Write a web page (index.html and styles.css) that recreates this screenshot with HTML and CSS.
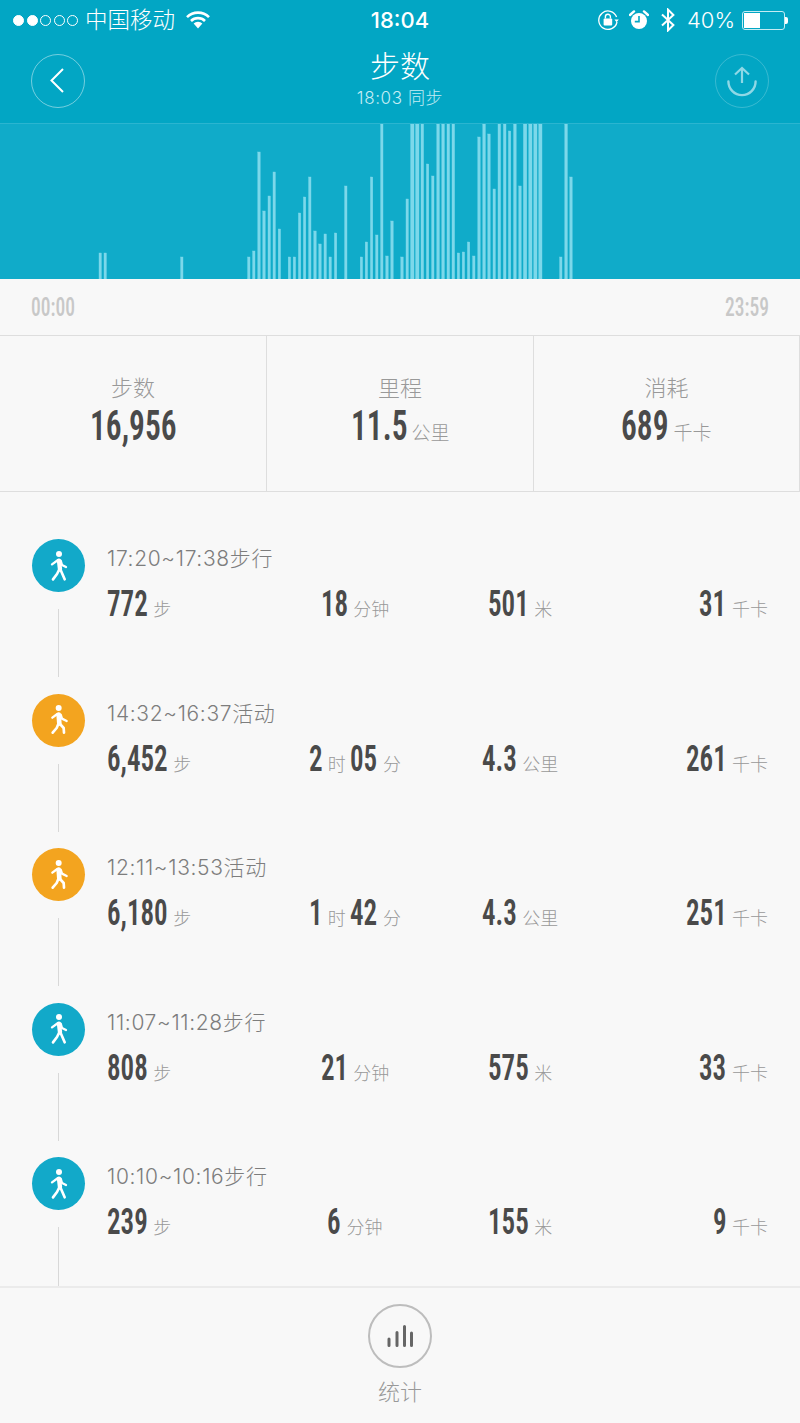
FILE: index.html
```html
<!DOCTYPE html>
<html lang="zh-CN">
<head>
    <meta charset="UTF-8">
    <meta name="viewport" content="width=device-width, initial-scale=1.0">
    <title>步数</title>
    <link rel="stylesheet" href="styles.css">
</head>
<body>
    <svg class="defs" width="0" height="0">
        <symbol id="walk-a" viewBox="0 0 66 96">
            <circle cx="33" cy="12" r="9" fill="#fff"/>
            <g fill="none" stroke="#fff" stroke-linecap="round" stroke-linejoin="round">
                <path d="M33 32 L36 58" stroke-width="13"/>
                <path d="M30 30 L12 43 M38 32 L42 45 L54 51" stroke-width="7"/>
                <path d="M37 58 L50 88 M33 60 L27 72 L15 88" stroke-width="8"/>
            </g>
        </symbol>
        <symbol id="walk-b" viewBox="0 0 66 96">
            <circle cx="32" cy="12" r="9" fill="#fff"/>
            <g fill="none" stroke="#fff" stroke-linecap="round" stroke-linejoin="round">
                <path d="M32 32 L34 58" stroke-width="14"/>
                <path d="M28 30 L13 41 M38 32 L42 44 L56 51" stroke-width="7"/>
                <path d="M36 60 L47 72 L48 86 M31 60 L26 72 L14 86" stroke-width="8"/>
            </g>
        </symbol>
    </svg>

    <header class="topbar">
        <div class="status">
            <div class="status-left">
                <span class="signal"><i class="on"></i><i class="on"></i><i></i><i></i><i></i></span>
                <span class="carrier">中国移动</span>
                <svg class="wifi" width="24" height="18" viewBox="0 0 24 18">
                    <path d="M1 6.2 A15.5 15.5 0 0 1 23 6.2" fill="none" stroke="#fff" stroke-width="2.6"/>
                    <path d="M5 10 A10 10 0 0 1 19 10" fill="none" stroke="#fff" stroke-width="2.6"/>
                    <path d="M7.6 12.6 A6.4 6.4 0 0 1 16.4 12.6 L12 17.6 Z" fill="#fff"/>
                </svg>
            </div>
            <span class="clock">18:04</span>
            <div class="status-right">
                <svg width="22" height="22" viewBox="0 0 22 22">
                    <path d="M20 13 A9.2 9.2 0 1 1 19.6 8" fill="none" stroke="#fff" stroke-width="1.3"/>
                    <path d="M17.4 10.4 L21.8 10.4 L19.6 13.2 Z" fill="#fff"/>
                    <rect x="6.6" y="9.6" width="8.6" height="6.8" rx="1" fill="#fff"/>
                    <path d="M8.4 9.6 V7.8 A2.5 2.5 0 0 1 13.4 7.8 V9.6" fill="none" stroke="#fff" stroke-width="1.4"/>
                </svg>
                <svg class="alarm" width="20" height="20" viewBox="0 0 20 20">
                    <circle cx="10" cy="11" r="8" fill="#fff"/>
                    <path d="M1 5 L5 1.4 M19 5 L15 1.4" stroke="#fff" stroke-width="2.4" stroke-linecap="round"/>
                    <path d="M10 6 V11.6 H5.8" fill="none" stroke="#02a6c4" stroke-width="1.6"/>
                </svg>
                <svg class="bt" width="16" height="24" viewBox="0 0 16 24">
                    <path d="M2 6.4 L13.4 17 L8 22.4 V1.6 L13.4 7 L2 17.6" fill="none" stroke="#fff" stroke-width="2"/>
                </svg>
                <span class="percent">40%</span>
                <span class="battery"><span class="battery-level"></span></span>
            </div>
        </div>
        <div class="nav">
            <button class="round-btn">
                <svg width="18" height="28" viewBox="0 0 18 28">
                    <path d="M14 2 L2.5 13.5 L14 25" fill="none" stroke="#fff" stroke-width="2"/>
                </svg>
            </button>
            <div class="nav-title">
                <h1>步数</h1>
                <p>18:03 同步</p>
            </div>
            <button class="round-btn round-btn-dim">
                <svg width="32" height="32" viewBox="0 0 32 32">
                    <path d="M16 18 V3 M9 9.5 L16 3 L23 9.5" fill="none" stroke="#8fd8e6" stroke-width="2.2"/>
                    <path d="M2.4 16.5 A13.6 13.6 0 0 0 29.6 16.5" fill="none" stroke="#8fd8e6" stroke-width="2.4" stroke-linecap="round"/>
                </svg>
            </button>
        </div>
    </header>

    <section class="chart">
        <svg width="800" height="155" viewBox="0 124 800 155">
            <g fill="#7cd8ea" stroke="#7cd8ea" stroke-width="0.4">
                <rect x="99" y="253" width="2.4" height="26"/><rect x="104" y="253" width="2.4" height="26"/>
                <rect x="180.6" y="257" width="2.4" height="22"/><rect x="247.6" y="257" width="2.4" height="22"/>
                <rect x="252.6" y="251" width="2.4" height="28"/><rect x="257.8" y="152" width="2.4" height="127"/>
                <rect x="262.8" y="211" width="2.4" height="68"/><rect x="268" y="196" width="2.4" height="83"/>
                <rect x="273" y="172" width="2.4" height="107"/><rect x="278.2" y="229" width="2.4" height="50"/>
                <rect x="288.2" y="257" width="2.4" height="22"/><rect x="293.2" y="257" width="2.4" height="22"/>
                <rect x="298.4" y="213" width="2.4" height="66"/><rect x="303.4" y="197" width="2.4" height="82"/>
                <rect x="308.6" y="177" width="2.4" height="102"/><rect x="313.8" y="231" width="2.4" height="48"/>
                <rect x="318.8" y="244" width="2.4" height="35"/><rect x="324" y="234" width="2.4" height="45"/>
                <rect x="329" y="257" width="2.4" height="22"/><rect x="334.4" y="233" width="2.4" height="46"/>
                <rect x="344.6" y="186" width="2.4" height="93"/><rect x="360.2" y="257" width="2.4" height="22"/>
                <rect x="365.2" y="242" width="2.4" height="37"/><rect x="370.4" y="177" width="2.4" height="102"/>
                <rect x="375.6" y="235" width="2.4" height="44"/><rect x="380.6" y="124" width="2.4" height="155"/>
                <rect x="385.8" y="256" width="2.4" height="23"/><rect x="390.8" y="221" width="2.4" height="58"/>
                <rect x="400.8" y="257" width="2.4" height="22"/><rect x="406" y="199" width="2.4" height="80"/>
                <rect x="410.6" y="124" width="3.4" height="155"/><rect x="415.6" y="124" width="3.4" height="155"/>
                <rect x="421" y="124" width="2.6" height="155"/><rect x="426.4" y="164" width="2.4" height="115"/>
                <rect x="431.6" y="176" width="2.4" height="103"/><rect x="436.8" y="124" width="2.6" height="155"/>
                <rect x="441.8" y="124" width="2.6" height="155"/><rect x="447" y="124" width="2.6" height="155"/>
                <rect x="452" y="124" width="2.6" height="155"/><rect x="457.2" y="253" width="2.4" height="26"/>
                <rect x="462.2" y="252" width="2.4" height="27"/><rect x="467.4" y="242" width="2.4" height="37"/>
                <rect x="472.6" y="256" width="2.4" height="23"/><rect x="477.8" y="137" width="2.4" height="142"/>
                <rect x="482.8" y="124" width="2.6" height="155"/><rect x="487.8" y="134" width="2.4" height="145"/>
                <rect x="493" y="189" width="2.4" height="90"/><rect x="498" y="124" width="2.6" height="155"/>
                <rect x="503.4" y="124" width="2.6" height="155"/><rect x="508.4" y="131" width="2.4" height="148"/>
                <rect x="513.6" y="124" width="2.6" height="155"/><rect x="518.8" y="186" width="2.4" height="93"/>
                <rect x="523.4" y="124" width="3.4" height="155"/><rect x="528.8" y="124" width="3.2" height="155"/>
                <rect x="533.8" y="124" width="3.2" height="155"/><rect x="538.8" y="124" width="3.2" height="155"/>
                <rect x="559.6" y="257" width="2.4" height="22"/><rect x="564.8" y="124" width="2.6" height="155"/>
                <rect x="569.8" y="177" width="2.4" height="102"/>
            </g>
        </svg>
    </section>

    <div class="times">
        <span class="num">00:00</span>
        <span class="num">23:59</span>
    </div>

    <section class="stats">
        <div class="stat">
            <div class="stat-label">步数</div>
            <div class="stat-value"><b class="num">16,956</b></div>
        </div>
        <div class="stat">
            <div class="stat-label">里程</div>
            <div class="stat-value"><b class="num">11.5</b> <small>公里</small></div>
        </div>
        <div class="stat">
            <div class="stat-label">消耗</div>
            <div class="stat-value"><b class="num">689</b> <small>千卡</small></div>
        </div>
    </section>

    <main class="list">
        <article class="item">
            <div class="dot dot-walk"><svg width="22" height="32"><use href="#walk-a"/></svg></div>
            <div class="item-body">
                <div class="item-title">17:20~17:38步行</div>
                <div class="cols">
                    <div class="col"><b class="num">772</b> <small>步</small></div>
                    <div class="col"><b class="num">18</b> <small>分钟</small></div>
                    <div class="col"><b class="num">501</b> <small>米</small></div>
                    <div class="col"><b class="num">31</b> <small>千卡</small></div>
                </div>
            </div>
        </article>
        <article class="item">
            <div class="dot dot-active"><svg width="22" height="32"><use href="#walk-b"/></svg></div>
            <div class="item-body">
                <div class="item-title">14:32~16:37活动</div>
                <div class="cols">
                    <div class="col"><b class="num">6,452</b> <small>步</small></div>
                    <div class="col"><b class="num">2</b> <small>时</small> <b class="num">05</b> <small>分</small></div>
                    <div class="col"><b class="num">4.3</b> <small>公里</small></div>
                    <div class="col"><b class="num">261</b> <small>千卡</small></div>
                </div>
            </div>
        </article>
        <article class="item">
            <div class="dot dot-active"><svg width="22" height="32"><use href="#walk-b"/></svg></div>
            <div class="item-body">
                <div class="item-title">12:11~13:53活动</div>
                <div class="cols">
                    <div class="col"><b class="num">6,180</b> <small>步</small></div>
                    <div class="col"><b class="num">1</b> <small>时</small> <b class="num">42</b> <small>分</small></div>
                    <div class="col"><b class="num">4.3</b> <small>公里</small></div>
                    <div class="col"><b class="num">251</b> <small>千卡</small></div>
                </div>
            </div>
        </article>
        <article class="item">
            <div class="dot dot-walk"><svg width="22" height="32"><use href="#walk-a"/></svg></div>
            <div class="item-body">
                <div class="item-title">11:07~11:28步行</div>
                <div class="cols">
                    <div class="col"><b class="num">808</b> <small>步</small></div>
                    <div class="col"><b class="num">21</b> <small>分钟</small></div>
                    <div class="col"><b class="num">575</b> <small>米</small></div>
                    <div class="col"><b class="num">33</b> <small>千卡</small></div>
                </div>
            </div>
        </article>
        <article class="item">
            <div class="dot dot-walk"><svg width="22" height="32"><use href="#walk-a"/></svg></div>
            <div class="item-body">
                <div class="item-title">10:10~10:16步行</div>
                <div class="cols">
                    <div class="col"><b class="num">239</b> <small>步</small></div>
                    <div class="col"><b class="num">6</b> <small>分钟</small></div>
                    <div class="col"><b class="num">155</b> <small>米</small></div>
                    <div class="col"><b class="num">9</b> <small>千卡</small></div>
                </div>
            </div>
        </article>
    </main>

    <footer class="tabbar">
        <div class="tab-icon">
            <svg width="26" height="24" viewBox="0 0 26 24">
                <path d="M2 15 V21.5 M10 8.5 V21.5 M17.5 2.5 V21.5 M24.5 9 V21.5" stroke="#666" stroke-width="3" stroke-linecap="round" fill="none"/>
            </svg>
        </div>
        <div class="tab-label">统计</div>
    </footer>

    <script src="app.js"></script>
</body>
</html>
```

FILE: styles.css
```css
* {
    box-sizing: border-box;
}

body {
    margin: 0;
    height: 1423px;
    overflow: hidden;
    display: flex;
    flex-direction: column;
    background: #f8f8f8;
    color: #4a4a4a;
    font-family: Inter, "Noto Sans CJK SC", sans-serif;
    font-weight: 300;
}

.defs {
    position: absolute;
}

/* narrow digits, the box width is set in app.js */
.num {
    display: inline-block;
    font-family: Roboto, sans-serif;
    font-stretch: 75%;
    font-weight: 600;
    white-space: nowrap;
    transform: scaleX(0.75);
    transform-origin: left center;
}

/* top bar */
.topbar {
    height: 123px;
    flex: none;
    background: #02a6c4;
    color: #fff;
}

.status {
    height: 40px;
    padding: 0 12px 0 13px;
    display: flex;
    align-items: center;
    justify-content: space-between;
    position: relative;
}

.status-left,
.status-right {
    display: flex;
    align-items: center;
}

.signal {
    display: flex;
    gap: 2.5px;
    margin-right: 7px;
}

.signal i {
    width: 11px;
    height: 11px;
    border: 1px solid #fff;
    border-radius: 50%;
}

.signal i.on {
    background: #fff;
}

.carrier {
    font-size: 22.5px;
    line-height: 40px;
}

.wifi {
    margin-left: 11px;
}

.clock {
    position: absolute;
    left: 0;
    right: 0;
    text-align: center;
    font-size: 22px;
    font-weight: 500;
}

.alarm {
    margin-left: 10px;
}

.bt {
    margin-left: 11px;
}

.percent {
    margin-left: 11px;
    font-size: 22px;
    font-weight: 300;
}

.battery {
    width: 43px;
    height: 19px;
    margin-left: 7px;
    border: 1px solid #c4ecf3;
    border-radius: 3px;
    position: relative;
    padding: 1px;
    margin-right: 3px;
}

.battery::after {
    content: "";
    position: absolute;
    right: -4px;
    top: 5px;
    width: 3px;
    height: 7px;
    background: #fff;
    border-radius: 0 2px 2px 0;
}

.battery-level {
    display: block;
    width: 16px;
    height: 15px;
    background: #fff;
}

.nav {
    height: 83px;
    padding: 0 31px;
    display: flex;
    align-items: flex-start;
    justify-content: space-between;
}

.round-btn {
    width: 54px;
    height: 54px;
    margin-top: 14px;
    padding: 0;
    background: none;
    border: 1px solid rgba(255, 255, 255, 0.45);
    border-radius: 50%;
    display: flex;
    align-items: center;
    justify-content: center;
}

.round-btn-dim {
    border-color: rgba(255, 255, 255, 0.22);
}

.nav-title {
    text-align: center;
}

.nav-title h1 {
    margin: 6px 0 0;
    font-size: 30px;
    font-weight: 300;
    line-height: 40px;
}

.nav-title p {
    margin: 2px 0 0;
    font-size: 17px;
    letter-spacing: 0.6px;
    line-height: 20px;
    color: #c5edf4;
}

/* chart */
.chart {
    height: 156px;
    flex: none;
    background: #10abc9;
    border-top: 1px solid #2bb5d0;
}

.chart svg {
    display: block;
}

.times {
    height: 57px;
    flex: none;
    padding: 0 31px;
    display: flex;
    align-items: center;
    justify-content: space-between;
    border-bottom: 1px solid #dedede;
    font-size: 25px;
    color: #c8c8c8;
}

.times .num {
    font-weight: 500;
    transform: scaleX(0.78);
}

/* summary */
.stats {
    height: 156px;
    flex: none;
    display: grid;
    grid-template-columns: 267px 267px 266px;
    border-bottom: 1px solid #dedede;
}

.stat {
    border-right: 1px solid #dedede;
    text-align: center;
    padding-top: 36px;
}

.stat-label {
    font-size: 22px;
    line-height: 32px;
    color: #999;
}

.stat-value {
    margin-top: 1px;
    line-height: 42px;
}

.stat-value .num {
    font-size: 42px;
    color: #4a4a4a;
}

.stat-value small {
    font-size: 19px;
    color: #999;
}

/* list */
.list {
    flex: 1;
    overflow: hidden;
    padding: 47px 32px 0;
}

.item {
    height: 154.5px;
    display: flex;
    position: relative;
}

.item::after {
    content: "";
    position: absolute;
    left: 26px;
    top: 70px;
    width: 1px;
    height: 68px;
    background: #d8d8d8;
}

.dot {
    width: 53px;
    height: 53px;
    flex: none;
    border-radius: 50%;
    display: flex;
    align-items: center;
    justify-content: center;
}

.dot-walk {
    background: #12a9c9;
}

.dot-active {
    background: #f3a41f;
}

.item-body {
    flex: 1;
    margin-left: 22px;
}

.item-title {
    font-size: 21px;
    letter-spacing: 0.65px;
    line-height: 28px;
    margin-top: 6px;
    color: #7d7d7d;
}

.cols {
    margin-top: 11px;
    display: grid;
    grid-template-columns: repeat(4, 1fr);
    line-height: 40px;
}

.col {
    text-align: center;
    white-space: nowrap;
}

.col:first-child {
    text-align: left;
}

.col:last-child {
    text-align: right;
}

.col .num {
    font-size: 36px;
    color: #4a4a4a;
}

.col small {
    font-size: 18px;
    color: #999;
    margin-left: 1px;
}

/* bottom */
.tabbar {
    height: 137px;
    flex: none;
    border-top: 2px solid #ebebeb;
    display: flex;
    flex-direction: column;
    align-items: center;
    background: #f8f8f8;
}

.tab-icon {
    width: 64px;
    height: 64px;
    margin-top: 16px;
    border: 2px solid #bdbdbd;
    border-radius: 50%;
    display: flex;
    align-items: center;
    justify-content: center;
}

.tab-label {
    margin-top: 8px;
    font-size: 22px;
    line-height: 32px;
    color: #999;
}
```

FILE: app.js
```js
// scaleX does not change layout, so give each number the width it is drawn at
document.querySelectorAll('.num').forEach(el => {
    el.style.width = el.getBoundingClientRect().width + 'px';
});
```
